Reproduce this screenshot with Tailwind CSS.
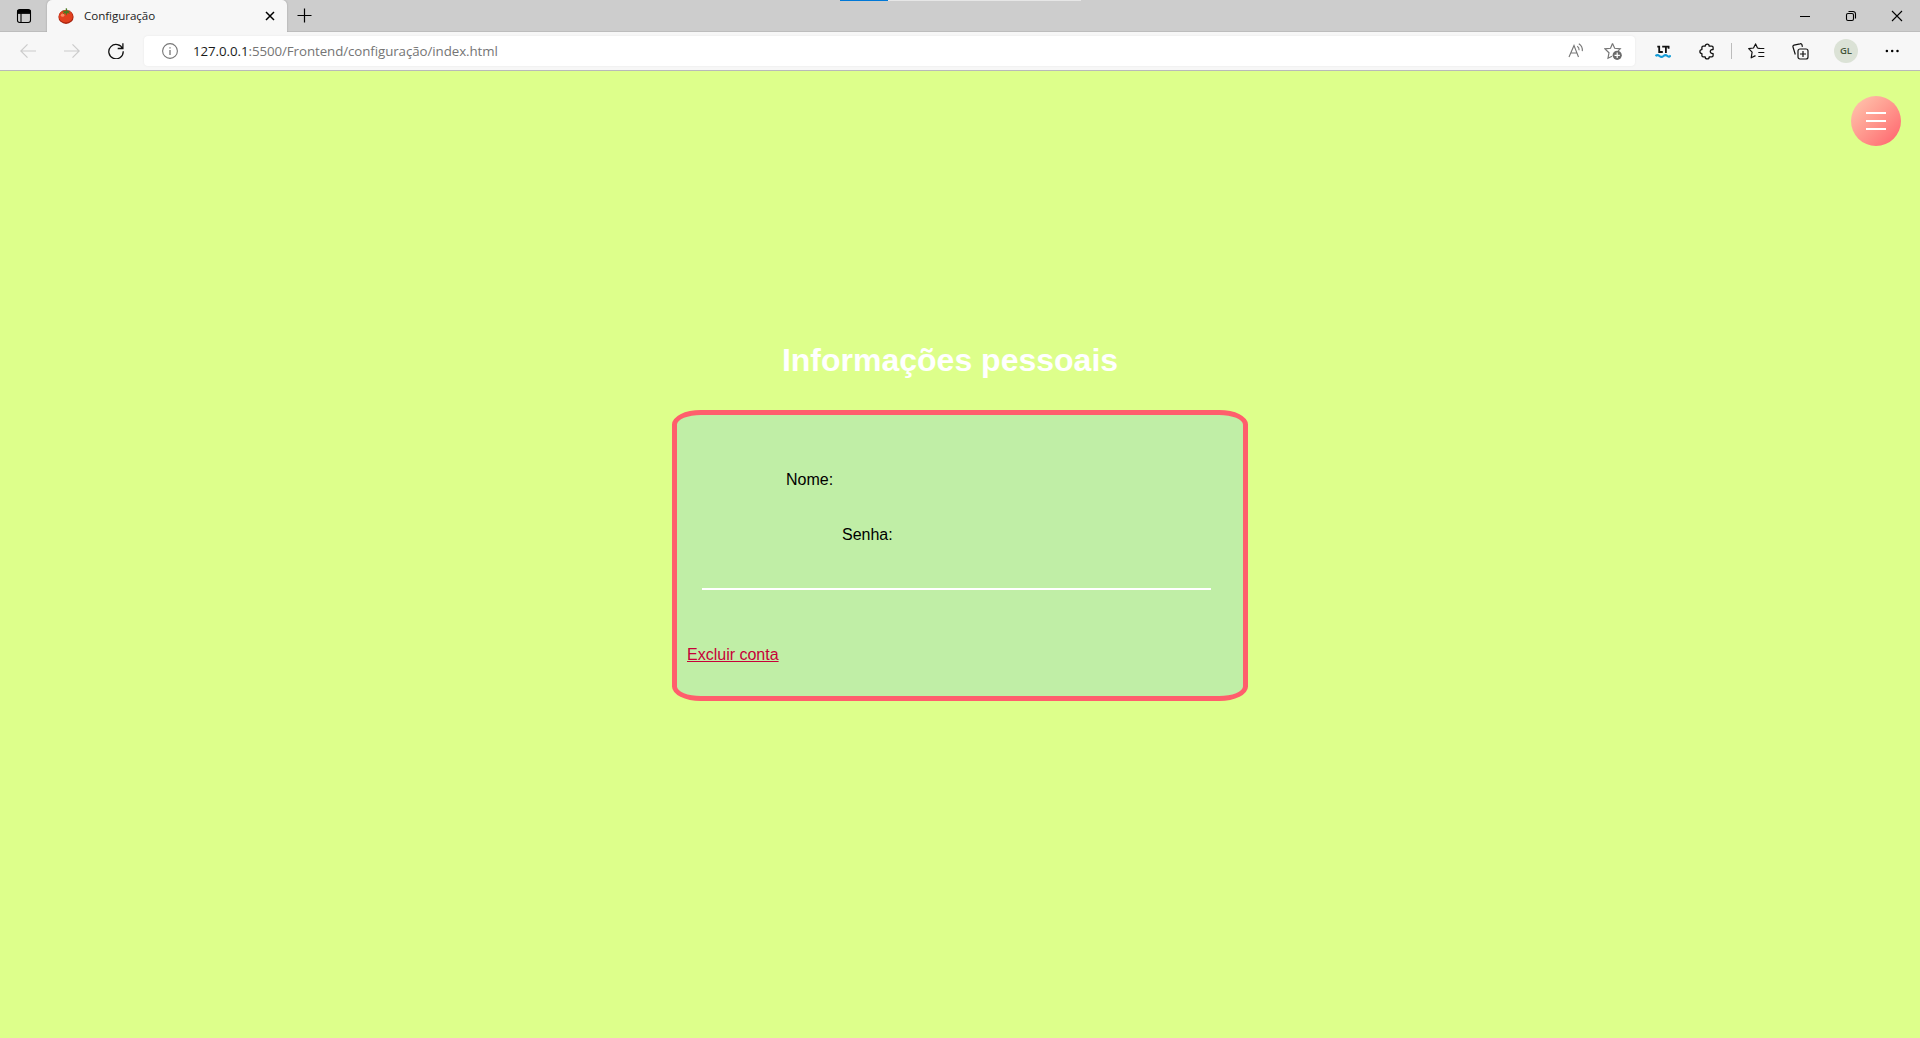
<!DOCTYPE html>
<html lang="pt-BR">
<head>
<meta charset="utf-8">
<title>Configuração</title>
<script src="https://cdn.jsdelivr.net/npm/@tailwindcss/browser@4"></script>
</head>
<body class="flex h-screen flex-col overflow-hidden bg-[#ddff8b] font-['Liberation_Sans',sans-serif]">
  <!-- Tab strip -->
  <header class="relative flex h-8 shrink-0 bg-[#cdcdcd] shadow-[inset_0_-1px_0_#bdbdbd]">
    <div class="flex w-[47px] items-center pl-4">
      <svg class="size-4" viewBox="0 0 16 16" fill="none" stroke="#000" stroke-width="1.1"><rect x="1.5" y="1.5" width="13" height="13" rx="2.2"/><path d="M1.5 5.2h13M5 5v9.5"/><path d="M2 2.5h12v2.4H2z" fill="#000"/></svg>
    </div>
    <div class="relative flex w-60 items-center rounded-t-[5px] bg-[#f7f7f7] pl-[11px] shadow-[0_0_2px_#999] [clip-path:inset(0_-3px_0_-3px)]">
      <svg class="size-4" viewBox="0 0 16 16"><ellipse cx="8" cy="8.900" rx="7.600" ry="7" fill="#a82410"/><ellipse cx="7.800" cy="8.400" rx="6.900" ry="6.200" fill="#e2401f"/><ellipse cx="4.600" cy="7.200" rx="1.800" ry="1.600" fill="#ff8a62"/><path d="M8 3.200 4 2.600l2 1.600-1.500 2L7.300 5l1.200 2.600.8-2.600 3 .8-1.800-1.800 2-1.500-3.200.4L9 .3 7.600.5z" fill="#4c7a22"/></svg>
      <span class="ml-[10px] w-[71px] text-[11.600px] tracking-[-0.05px] whitespace-nowrap text-[#1c1c1c] font-['Open_Sans',sans-serif]">Configuração</span>
      <svg class="ml-[109px] size-3" viewBox="0 0 12 12" stroke="#000" stroke-width="1.500"><path d="m2 2 8 8M10 2l-8 8"/></svg>
    </div>
    <svg class="mt-2 ml-[9px] size-4" viewBox="0 0 16 16" stroke="#000" stroke-width="1.200"><path d="M1.500 7.500h14M8.500.5v14"/></svg>
    <div class="absolute top-0 left-[840px] h-px w-[241px] bg-[#e6e6e6]"><div class="h-px w-12 bg-[#0078d7]"></div></div>
    <div class="ml-auto flex pr-[17px] pt-[10px]">
      <svg class="h-3 w-3" viewBox="0 0 12 12" stroke="#000"><path d="M1 6.500h10"/></svg>
      <svg class="ml-[34px] h-3 w-3" viewBox="0 0 12 12" fill="none" stroke="#000" stroke-width="1.100"><rect x="1.500" y="3.500" width="7" height="7" rx="1.500"/><path d="M3.500 1.500h4.500a2.500 2.500 0 0 1 2.500 2.500v4.500"/></svg>
      <svg class="ml-[34px] h-3 w-3" viewBox="0 0 12 12" stroke="#000" stroke-width="1.100"><path d="m1 1 10 10M11 1 1 11"/></svg>
    </div>
  </header>

  <!-- Toolbar -->
  <nav class="flex h-[39px] shrink-0 items-center border-b border-[#b9b9b9] bg-[#f7f7f7]">
    <svg class="ml-5 size-4" viewBox="0 0 16 16" fill="none" stroke="#cbcbcb" stroke-width="1.200"><path d="M16 8H.8M7.500 1.300.8 8l6.700 6.700"/></svg>
    <svg class="ml-7 size-4" viewBox="0 0 16 16" fill="none" stroke="#cbcbcb" stroke-width="1.200"><path d="M0 8h15.200M8.500 1.300 15.200 8l-6.700 6.700"/></svg>
    <svg class="ml-7 size-4" viewBox="0 0 16 16" fill="none" stroke="#111" stroke-width="1.300"><path d="M14.700 6A7.200 7.200 0 1 0 15.200 8.300M14.900.3v5.200H9.700"/></svg>
    <div class="ml-5 flex h-[30px] w-[1491px] items-center rounded bg-white pl-[18px] shadow-[0_0_2px_#e4e4e4]">
      <svg class="size-4" viewBox="0 0 16 16" fill="none" stroke="#767676" stroke-width="1.100"><circle cx="8" cy="8" r="7.400"/><path d="M8 7v5M8 4.200v1.400" stroke-width="1.300"/></svg>
      <span class="mt-px ml-[15px] w-[305px] text-[13.300px] tracking-[-0.07px] whitespace-nowrap text-[#757575] font-['Open_Sans',sans-serif]"><span class="text-[#1a1a1a]">127.0.0.1</span>:5500/Frontend/configuração/index.html</span>
      <svg class="ml-auto h-4 w-[17px] translate-x-px" viewBox="0 0 17 16" fill="none" stroke="#767676" stroke-width="1.100"><path d="m1 14 5-11.500 4.500 11.500M2.800 10h6M9.300 3.200q2 1.400 1.800 4M10.800.8q4 2.500 3.500 7.300"/></svg>
      <svg class="ml-5 mr-[13px] h-[18px] w-[18px]" viewBox="0 0 18 18"><path d="M8.500 1.500 6.500 6.300 1 6.800l4 4-1 5.400 4-2M8.500 1.500l2.200 4.800 5.500.5-2 2" fill="none" stroke="#767676" stroke-width="1.200"/><circle cx="13.200" cy="13.300" r="4.600" fill="#6b6b6b"/><path d="M10.500 13.300h5.400M13.200 10.600V16" stroke="#fff" stroke-width="1.200"/></svg>
    </div>
    <svg class="ml-5 h-4 w-4" viewBox="0 0 16 16" fill="none"><path d="M2.300 3.700h1.900V9h3.600M7.200 3.700h7.200M10.900 3.700V10M13.600 3v2.700" stroke="#111" stroke-width="1.800"/><path d="M.5 13q2-1.800 4 0t4 0 4 0 3-.8" stroke="#149bd7" stroke-width="2"/></svg>
    <svg class="ml-[28px] h-[17px] w-4" viewBox="0 0 16 17" fill="none" stroke="#111" stroke-width="1.300"><path d="M4.200 3.200h2a2 2 0 0 1 4 0h2.600q1.300 0 1.300 1.300v2c-3.800-.2-3.800 4.300 0 4.100v2q0 1.300-1.300 1.300h-2.600a2 2 0 0 1-4 0h-2q-1.300 0-1.300-1.300v-2a2 2 0 0 1 0-4v-2q0-1.400 1.300-1.400z" stroke-linejoin="round"/></svg>
    <i class="ml-4 h-4 w-px bg-[#bcbcbc]"></i>
    <svg class="ml-4 h-4 w-[17px]" viewBox="0 0 17 16" fill="none" stroke="#111" stroke-width="1.200"><path d="M11.500 5.300 9.500 5 7.600.9 5.500 5 .7 5.700l3.400 3.500-.9 5.600 4.300-2.200M10.300 5.500h6M10.300 9.500h6M10.300 13.500h6" stroke-linejoin="round"/></svg>
    <svg class="ml-[27px] h-[17px] w-[17px]" viewBox="0 0 17 17" fill="none" stroke="#111" stroke-width="1.200"><path d="M3.300 11.500 1 4Q.6 2.600 2 2.100L8 .8q1.500-.4 2 1l.4 2"/><rect x="6" y="6" width="10" height="10" rx="2"/><path d="M11 8v6M8 11h6"/></svg>
    <div class="ml-[25px] flex size-6 items-center justify-center rounded-full bg-[#dbe2d6] text-[9.500px] font-semibold text-[#44553b] font-['Open_Sans',sans-serif]">GL</div>
    <svg class="ml-[26px] h-4 w-4" viewBox="0 0 16 16"><circle cx="2.900" cy="8" r="1.250"/><circle cx="8.200" cy="8" r="1.250"/><circle cx="13.500" cy="8" r="1.250"/></svg>
  </nav>

  <main class="flex grow flex-col items-center">
    <div class="flex h-[75px] w-full shrink-0 justify-end pt-[25px] pr-[19px]">
      <button class="flex size-[50px] shrink-0 flex-col items-center justify-center gap-1.5 rounded-full bg-linear-to-br from-[#ffc9b0] to-[#ff5e6c]" aria-label="Menu">
        <i class="h-0.5 w-5 bg-white"></i><i class="h-0.5 w-5 bg-white"></i><i class="h-0.5 w-5 bg-white"></i>
      </button>
    </div>
    <h1 class="mt-[196px] mr-5 text-[32px] leading-[37px] font-bold whitespace-nowrap text-white">Informações pessoais</h1>
    <section class="mt-[31px] h-[291px] w-[576px] rounded-[5%] border-[5px] border-[#ff5e6c] bg-[#c0eea6] pt-[56px] pl-[10px] text-base leading-[18px]">
      <p class="pl-[99px] text-black">Nome:</p>
      <p class="mt-[37px] pl-[155px] text-black">Senha:</p>
      <hr class="mt-11 ml-[15px] h-0.5 w-[509px] border-0 bg-white">
      <a class="mt-[56px] block w-fit text-[#c70039] underline">Excluir conta</a>
    </section>
  </main>
</body>
</html>
